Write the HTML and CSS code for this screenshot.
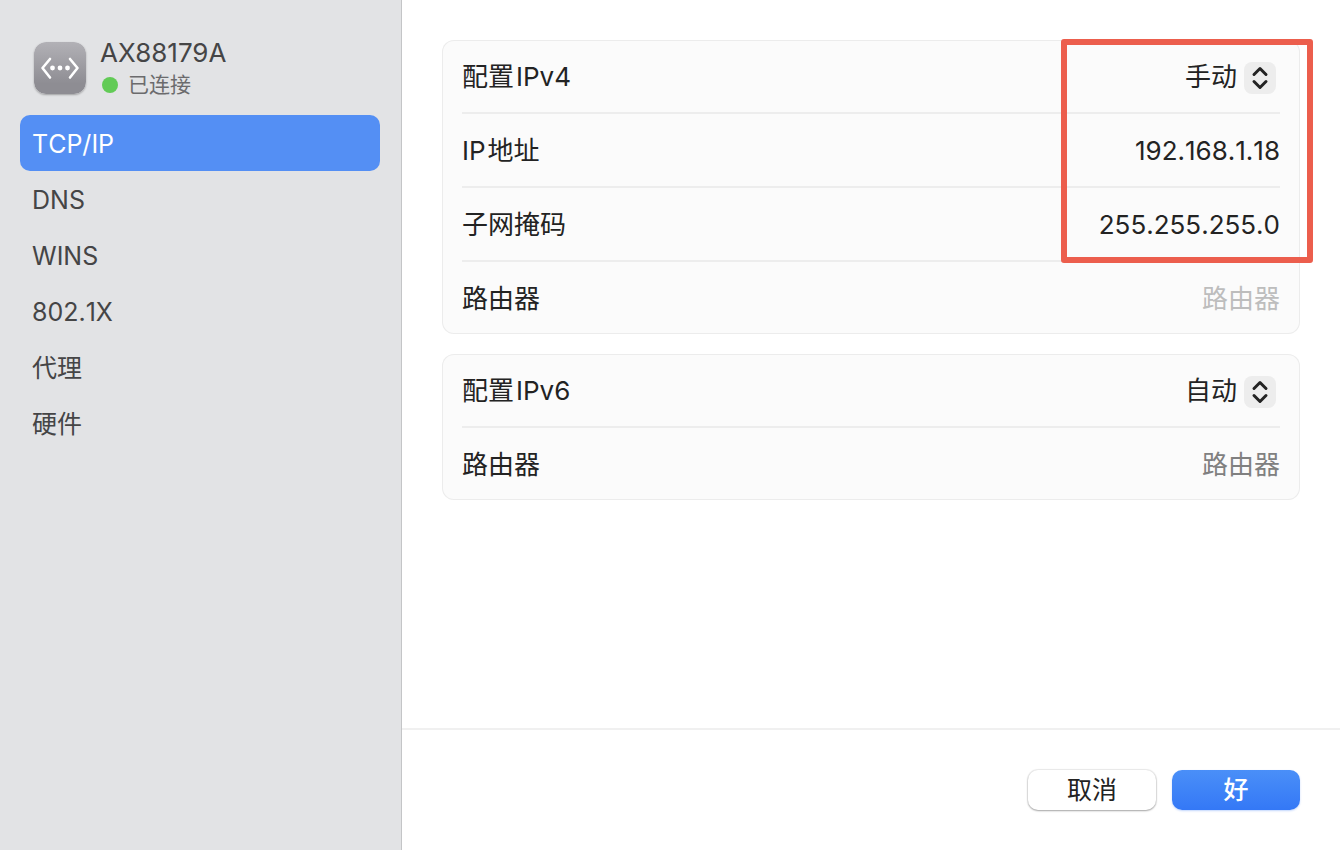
FILE: index.html
```html
<!DOCTYPE html>
<html lang="zh-CN">
<head>
<meta charset="utf-8">
<meta name="viewport" content="width=device-width, initial-scale=1">
<title>AX88179A</title>
<link rel="stylesheet" href="styles.css">
</head>
<body>
<div class="window">
  <aside class="sidebar">
    <header class="device">
      <svg class="device-icon" viewBox="0 0 52 52" aria-hidden="true">
        <defs>
          <linearGradient id="tile" x1="0" y1="0" x2="0" y2="1">
            <stop offset="0" stop-color="#b2b1b6"/>
            <stop offset="0.8" stop-color="#8e8d93"/>
            <stop offset="1" stop-color="#8e8d93"/>
          </linearGradient>
        </defs>
        <rect width="52" height="52" rx="12" fill="url(#tile)"/>
        <path d="M16 17 L8.500 26 L16 35.500 M36 17 L43.500 26 L36 35.500" fill="none" stroke="#fff" stroke-width="2.600" stroke-linecap="round" stroke-linejoin="round"/>
        <g fill="#fff"><circle cx="18.500" cy="26" r="2.400"/><circle cx="26" cy="26" r="2.400"/><circle cx="33.500" cy="26" r="2.400"/></g>
      </svg>
      <div class="device-text">
        <h1 class="device-name">AX88179A</h1>
        <p class="device-status"><span class="status-dot"></span>已连接</p>
      </div>
    </header>
    <nav class="tabs">
      <button class="tab tab-active" type="button">TCP/IP</button>
      <button class="tab" type="button">DNS</button>
      <button class="tab" type="button">WINS</button>
      <button class="tab" type="button">802.1X</button>
      <button class="tab" type="button">代理</button>
      <button class="tab" type="button">硬件</button>
    </nav>
  </aside>
  <form class="main">
    <div class="content">
      <section class="card">
        <div class="row">
          <label class="label label-mixed" for="ipv4">配置<span>IPv4</span></label>
          <div class="picker">
            <select class="select" id="ipv4"><option>手动</option></select>
            <svg class="chevrons" viewBox="0 0 32 32" aria-hidden="true"><path d="M10 12.500 L16 6.500 L22 12.500 M10 19.500 L16 25.500 L22 19.500"/></svg>
          </div>
        </div>
        <div class="row">
          <label class="label label-mixed" for="ip"><span>IP</span>地址</label>
          <input class="field" id="ip" type="text" value="192.168.1.18">
        </div>
        <div class="row">
          <label class="label" for="mask">子网掩码</label>
          <input class="field" id="mask" type="text" value="255.255.255.0">
        </div>
        <div class="row">
          <label class="label" for="router">路由器</label>
          <input class="field" id="router" type="text" placeholder="路由器">
        </div>
        <div class="highlight"></div>
      </section>
      <section class="card">
        <div class="row">
          <label class="label label-mixed" for="ipv6">配置<span>IPv6</span></label>
          <div class="picker">
            <select class="select" id="ipv6"><option>自动</option></select>
            <svg class="chevrons" viewBox="0 0 32 32" aria-hidden="true"><path d="M10 12.500 L16 6.500 L22 12.500 M10 19.500 L16 25.500 L22 19.500"/></svg>
          </div>
        </div>
        <div class="row">
          <span class="label">路由器</span>
          <span class="value">路由器</span>
        </div>
      </section>
    </div>
    <footer class="footer">
      <button class="button" type="button">取消</button>
      <button class="button button-primary" type="submit">好</button>
    </footer>
  </form>
</div>
</body>
</html>
```

FILE: styles.css
```css
* {
  box-sizing: border-box;
}

body {
  margin: 0;
  background: #fff;
  color: #232323;
  font: 26px/32px Inter, "Noto Sans CJK SC", sans-serif;
}

button,
input,
select {
  font: inherit;
  color: inherit;
}

.window {
  display: flex;
  min-height: 100vh;
}

.sidebar {
  flex: 0 0 30%;
  padding: 37px 21px 20px 20px;
  background: #e2e3e5;
  border-right: 1px solid #c4c5c7;
  color: #454546;
}

.device {
  display: flex;
  align-items: flex-start;
  gap: 14px;
  padding: 0 14px 14px;
}

.device-icon {
  width: 52px;
  height: 52px;
  margin-top: 5px;
  border-radius: 12px;
  box-shadow: 0 1px 2px rgba(0, 0, 0, 0.3);
}

.device-name {
  margin: 0;
  font-size: 26px;
  font-weight: 400;
}

.device-status {
  display: flex;
  align-items: center;
  gap: 10px;
  margin: 0;
  padding-left: 2px;
  font-size: 21px;
  color: #6b6b6d;
}

.status-dot {
  width: 16px;
  height: 16px;
  border-radius: 50%;
  background: #62cb56;
}

.tabs {
  display: flex;
  flex-direction: column;
}

.tab {
  height: 56px;
  padding: 2px 12px 0;
  border: 0;
  border-radius: 10px;
  background: none;
  font-size: 25px;
  font-kerning: none;
  text-align: left;
}

.tab-active {
  background: #548ff4;
  color: #fff;
}

.main {
  flex: 1;
  min-width: 0;
  display: flex;
  flex-direction: column;
}

.content {
  flex: 1;
  display: flex;
  flex-direction: column;
  gap: 20px;
  padding: 40px;
}

.card {
  position: relative;
  padding: 0 20px;
  border-radius: 12px;
  background: #fbfbfb;
  box-shadow: inset 0 0 0 1px #ececec;
}

.row {
  display: flex;
  align-items: center;
  justify-content: space-between;
  gap: 20px;
  height: 72px;
  padding-top: 2px;
}

.row + .row {
  height: 74px;
  border-top: 2px solid #ededed;
}

.label-mixed {
  display: flex;
  gap: 2px;
}

.field {
  flex: 1;
  min-width: 0;
  padding: 0;
  border: 0;
  outline: 0;
  background: none;
  font-kerning: none;
  text-align: right;
}

.field::placeholder {
  color: #bdbdbd;
  opacity: 1;
}

.value {
  color: #808080;
}

.picker {
  position: relative;
  padding-right: 4px;
}

.select {
  appearance: none;
  display: block;
  padding: 0 38px 0 0;
  border: 0;
  background: none;
}

.chevrons {
  position: absolute;
  top: 1px;
  right: 4px;
  width: 32px;
  height: 32px;
  border-radius: 8px;
  background: #ededed;
  fill: none;
  stroke: #232323;
  stroke-width: 3;
  stroke-linecap: round;
  stroke-linejoin: round;
  pointer-events: none;
}

.highlight {
  position: absolute;
  top: -1px;
  right: -13px;
  width: 252px;
  height: 224px;
  border: 6px solid #ec5e4d;
  border-radius: 3px;
  pointer-events: none;
}

.footer {
  display: flex;
  justify-content: flex-end;
  gap: 16px;
  padding: 40px;
  border-top: 2px solid #f0f0f0;
}

.button {
  width: 128px;
  height: 40px;
  padding: 0;
  border: 0;
  border-radius: 10px;
  background: #fff;
  box-shadow: 0 0 1px 1px rgba(0, 0, 0, 0.08), 0 1px 2px rgba(0, 0, 0, 0.3);
  font-size: 25px;
}

.button-primary {
  background: linear-gradient(#4a8ff8, #3478f6);
  box-shadow: 0 1px 2px rgba(52, 120, 246, 0.3);
  color: #fff;
  font-weight: 500;
}
```
